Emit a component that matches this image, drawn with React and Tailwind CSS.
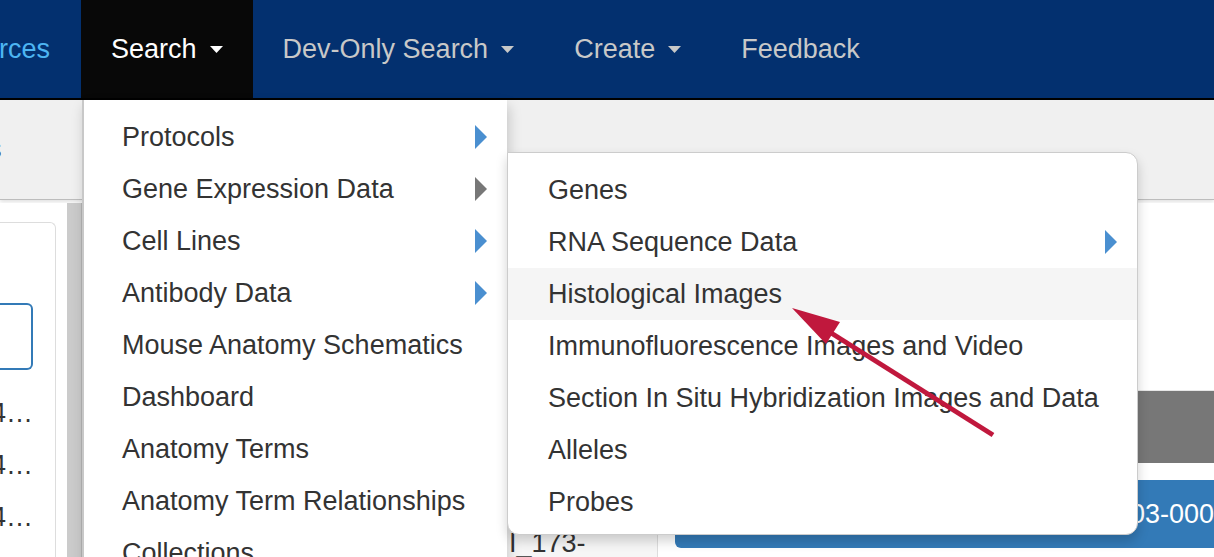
import React from "react";

const menuOne = [
  { label: "Protocols", sub: "#4a8fd0" },
  { label: "Gene Expression Data", sub: "#777777" },
  { label: "Cell Lines", sub: "#4a8fd0" },
  { label: "Antibody Data", sub: "#4a8fd0" },
  { label: "Mouse Anatomy Schematics" },
  { label: "Dashboard" },
  { label: "Anatomy Terms" },
  { label: "Anatomy Term Relationships" },
  { label: "Collections" },
];

const menuTwo = [
  { label: "Genes" },
  { label: "RNA Sequence Data", sub: "#4a8fd0" },
  { label: "Histological Images", active: true },
  { label: "Immunofluorescence Images and Video" },
  { label: "Section In Situ Hybridization Images and Data" },
  { label: "Alleles" },
  { label: "Probes" },
];

const Caret = () => (
  <svg width="13" height="7" viewBox="0 0 13 7" className="ml-[13px]">
    <polygon points="0,0 13,0 6.5,7" fill="currentColor" />
  </svg>
);

const SubArrow = ({ color }) => (
  <svg width="12" height="24" viewBox="0 0 12 24">
    <polygon points="0,0 12,12 0,24" fill={color} />
  </svg>
);

const MenuItem = ({ label, sub, active, pad }) => (
  <div
    className={`h-[52px] flex items-center justify-between pr-[20px] whitespace-nowrap ${pad} ${
      active ? "bg-[#f5f5f5]" : ""
    }`}
  >
    <span>{label}</span>
    {sub && <SubArrow color={sub} />}
  </div>
);

export default function App() {
  return (
    <div
      className="relative w-[1214px] h-[557px] overflow-hidden bg-white text-[27px] text-[#333]"
      style={{ fontFamily: '"Liberation Sans", Arial, sans-serif' }}
    >
      {/* Top navbar */}
      <nav className="h-[100px] bg-[#03306f] border-b-2 border-black flex items-stretch text-[#c8c8c8]">
        <div className="w-[81px] flex justify-end items-center pr-[31px] whitespace-nowrap text-[#4db5f2]">
          Resources
        </div>
        <div className="bg-[#080808] text-white px-[30px] flex items-center">
          Search
          <Caret />
        </div>
        <div className="px-[30px] flex items-center whitespace-nowrap">
          Dev-Only Search
          <Caret />
        </div>
        <div className="px-[30px] flex items-center">
          Create
          <Caret />
        </div>
        <div className="px-[30px] flex items-center">Feedback</div>
      </nav>

      {/* Sub header bar */}
      <div className="h-[100px] bg-[#f0f0f0] border-b border-[#bdbdbd] shadow-[0_2px_4px_rgba(0,0,0,0.12)] flex items-center">
        <span className="-ml-[12px] text-[#333333]">s</span>
      </div>

      {/* Page body */}
      <div className="flex h-[354px] mt-[3px]">
        {/* Left panel */}
        <div className="w-[67px] bg-white pt-[19px] pr-[11px]">
          <div className="h-full border border-l-0 border-b-0 border-[#dddddd] rounded-tr-[6px]">
            <div className="pt-[80px]">
              <div className="w-[33px] h-[67px] border-2 border-l-0 border-[#337ab7] rounded-r-[6px]" />
            </div>
            <div className="pt-[17px]">
              {["4", "4", "4", "5"].map((n, i) => (
                <div key={i} className="w-[33px] h-[52px] flex justify-end items-center whitespace-nowrap">
                  MD_17{n}…
                </div>
              ))}
            </div>
          </div>
        </div>
        <div className="w-[15px] bg-[#cbcbcb] border-r border-[#b5b5b5]" />

        {/* Middle column */}
        <div className="w-[576px] bg-[#f6f6f6] border-r border-[#dddddd] flex flex-col justify-end">
          <div className="h-[28px] pl-[427px] whitespace-nowrap leading-[28px]">I_173-</div>
        </div>

        {/* Right column */}
        <div className="flex-1 bg-white pt-[187px] pl-[17px]">
          <div className="h-[73px] bg-[#777777] border-t border-[#e6e6e6]" />
          <div className="mt-[17px] h-[68px] bg-[#337ab7] rounded-l-[6px] flex items-center pl-[455px] whitespace-nowrap text-white overflow-hidden">
            03-000
          </div>
        </div>
      </div>

      {/* First dropdown */}
      <div className="absolute left-[82px] top-[100px] w-[425px] h-[470px] bg-white border-l-2 border-[#c8c8c8] shadow-[2px_6px_12px_rgba(0,0,0,0.18)] pt-[11px]">
        {menuOne.map((m) => (
          <MenuItem key={m.label} {...m} pad="pl-[38px]" />
        ))}
      </div>

      {/* Second dropdown */}
      <div className="absolute left-[507px] top-[152px] w-[631px] bg-white border border-[#cccccc] rounded-tr-[12px] rounded-b-[12px] shadow-[0_6px_12px_rgba(0,0,0,0.18)] pt-[11px] pb-[6px]">
        {menuTwo.map((m) => (
          <MenuItem key={m.label} {...m} pad="pl-[40px]" />
        ))}
      </div>

      {/* Red annotation arrow */}
      <svg className="absolute left-0 top-0 pointer-events-none" width="1214" height="557" viewBox="0 0 1214 557">
        <line x1="993" y1="435" x2="828" y2="331" stroke="#c0183d" strokeWidth="5" />
        <polygon points="792,308 840,322 826,344" fill="#c0183d" />
      </svg>
    </div>
  );
}
